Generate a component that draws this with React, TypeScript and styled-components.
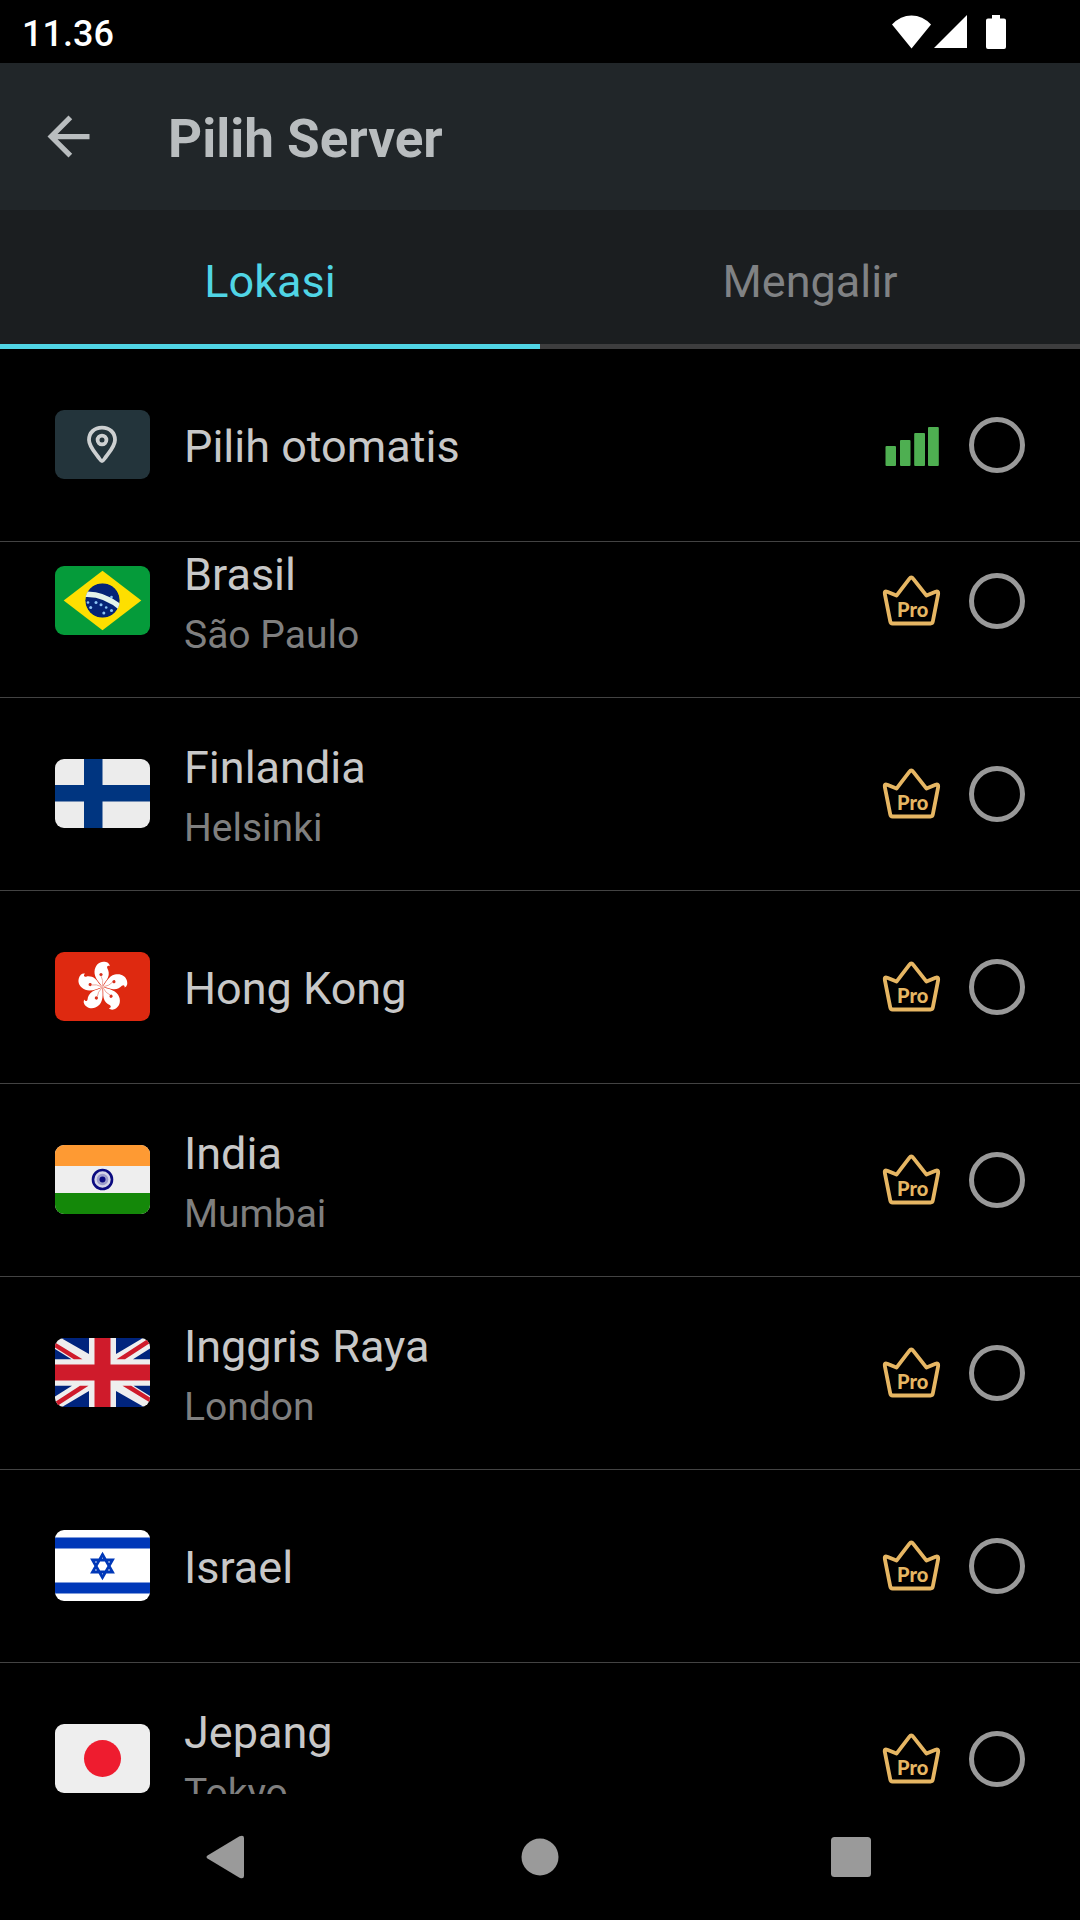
import React, { useLayoutEffect, useRef, useState } from "react";
import styled, { createGlobalStyle } from "styled-components";

const GlobalStyle = createGlobalStyle`
  *, *::before, *::after { box-sizing: border-box; }
  body {
    margin: 0;
    background: #000;
    color: #c8c8c8;
    font-family: Roboto, "Liberation Sans", sans-serif;
  }
  button { font: inherit; }
`;

const Screen = styled.div`
  display: flex;
  flex-direction: column;
  height: 100vh;
  background: #000;
`;

const StatusBar = styled.div`
  display: flex;
  align-items: center;
  justify-content: space-between;
  flex: none;
  height: 63px;
  padding: 0 74px 0 22px;
  color: #fff;
`;

const Clock = styled.time`
  padding-top: 4px;
  font-size: 36px;
  line-height: 40px;
  font-weight: 500;
`;

const StatusIcons = styled.div`
  display: flex;
  align-items: center;

  svg + svg { margin-left: 3px; }
  svg:last-child { margin-left: 19px; }
`;

const Header = styled.header`
  display: flex;
  align-items: center;
  flex: none;
  gap: 68px;
  height: 147px;
  padding: 0 37px;
  background: #212629;
  color: #b9bdbf;
`;

const BackButton = styled.button`
  display: flex;
  padding: 0;
  border: 0;
  background: none;
  color: inherit;
`;

const Title = styled.h1`
  margin: 0;
  padding-top: 4px;
  font-size: 53px;
  line-height: 64px;
  font-weight: 700;
`;

const Tabs = styled.div`
  display: grid;
  grid-template-columns: 1fr 1fr;
  flex: none;
  background: #1b1e20;
`;

const Tab = styled.button<{ $active: boolean }>`
  height: 139px;
  padding: 10px 0 0;
  border: 0;
  border-bottom: 5px solid ${(p) => (p.$active ? "#50d5e5" : "#3d3d3e")};
  background: none;
  color: ${(p) => (p.$active ? "#50d5e5" : "#808284")};
  font-size: 45px;
  line-height: 64px;
`;

const ServerList = styled.ul`
  flex: 1;
  min-height: 0;
  margin: 0;
  padding: 0;
  list-style: none;
  overflow-y: auto;
  scrollbar-width: none;
`;

const Row = styled.label`
  display: flex;
  align-items: center;
  flex: none;
  gap: 28px;
  height: 193px;
  padding: 0 55px;
  border-bottom: 1px solid #434343;
`;

const RowText = styled.span`
  display: flex;
  flex: 1;
  flex-direction: column;
  padding: 4px 0 0 6px;
`;

const Name = styled.span`
  font-size: 45px;
  line-height: 64px;
`;

const City = styled.span`
  color: #7f7f7f;
  font-size: 39px;
  line-height: 56px;
`;

const Radio = styled.input`
  appearance: none;
  flex: none;
  width: 56px;
  height: 56px;
  margin: 0;
  border: 5px solid #999;
  border-radius: 50%;

  &:checked {
    background: radial-gradient(circle, #50d5e5 50%, transparent 54%);
    border-color: #50d5e5;
  }
`;

const Flag = styled.svg`
  flex: none;
  margin-bottom: 1px;
  border-radius: 9px;
`;

const NavBar = styled.nav`
  display: flex;
  justify-content: center;
  flex: none;
  height: 126px;
`;

const NavButton = styled.button`
  display: flex;
  align-items: center;
  justify-content: center;
  width: 312px;
  padding: 0;
  border: 0;
  background: none;
  color: #9a9a9a;
`;

const PinTile = () => (
  <Flag width="95" height="69" viewBox="0 0 95 69" aria-hidden>
    <rect width="95" height="69" fill="#23343b" />
    <g fill="none" stroke="#cdd0d1" strokeWidth="3.8" strokeLinejoin="round">
      <path d="M47 51 C45.5 51 44.5 48.5 42.5 46 C38 40 34 35.500 34 30 C34 22.500 39.500 17.600 47 17.600 C54.500 17.600 60 22.500 60 30 C60 35.500 56 40 51.500 46 C49.500 48.500 48.500 51 47 51 Z" />
      <circle cx="47" cy="30" r="4.400" />
    </g>
  </Flag>
);

const Brazil = () => (
  <Flag width="95" height="69" viewBox="0 0 95 69" aria-hidden>
    <defs>
      <clipPath id="globe">
        <circle cx="47.500" cy="34.500" r="17.300" />
      </clipPath>
    </defs>
    <rect width="95" height="69" fill="#059b3a" />
    <path d="M8.700 34.500 47.500 4.700 86.300 34.500 47.500 64.300Z" fill="#fedf00" />
    <g clipPath="url(#globe)">
      <circle cx="47.500" cy="34.500" r="17.300" fill="#052476" />
      <path d="M28 28.500 Q49 26.500 68 43.500" fill="none" stroke="#e3f3ea" strokeWidth="5.400" />
      <g fill="#8cc5f5">
        <circle cx="33" cy="36.500" r="1.300" />
        <circle cx="35.700" cy="41.500" r="1.500" />
        <circle cx="41" cy="36.500" r="1.500" />
        <circle cx="46" cy="38.800" r="1.500" />
        <circle cx="51.200" cy="41.500" r="1.300" />
        <circle cx="56.500" cy="44.500" r="1.500" />
        <circle cx="48.800" cy="47" r="1.500" />
        <circle cx="56.500" cy="31" r="1.300" />
      </g>
    </g>
  </Flag>
);

const Finland = () => (
  <Flag width="95" height="69" viewBox="0 0 95 69" aria-hidden>
    <rect width="95" height="69" fill="#ececec" />
    <path d="M29 0h18.500v69H29zM0 26h95v16.500H0z" fill="#003580" />
  </Flag>
);

const HongKong = () => (
  <Flag width="95" height="69" viewBox="0 0 95 69" aria-hidden>
    <rect width="95" height="69" fill="#de2910" />
    {[0, 72, 144, 216, 288].map((angle) => (
      <g key={angle} transform={`translate(47.500 35) rotate(${angle})`}>
        <path
          d="M0 0 C-2.500 -4 -8.500 -9 -8 -15.500 C-7.500 -21.500 -3.500 -25.200 1 -25.200 C4.500 -25.200 7 -23.800 7.300 -20.800 C5.500 -22 4 -20.800 4.800 -18.800 C6.200 -16.500 7 -13 5.500 -9.500 C4 -6 1.200 -4 0 0Z"
          fill="#fff"
        />
        <path d="M0 -1 Q1 -7 -1.500 -11" fill="none" stroke="#e98a7c" strokeWidth="0.700" />
        <circle cx="-1.500" cy="-12.500" r="1.600" fill="#d8301c" />
      </g>
    ))}
  </Flag>
);

const India = () => (
  <Flag width="95" height="69" viewBox="0 0 95 69" aria-hidden>
    <rect width="95" height="69" fill="#eee" />
    <rect width="95" height="21" fill="#fe9a33" />
    <rect y="48" width="95" height="21" fill="#148809" />
    <circle cx="47.500" cy="34.500" r="9.500" fill="#d5d5e8" stroke="#0b0b80" strokeWidth="2.600" />
    <circle cx="47.500" cy="34.500" r="5.800" fill="#9c9ccb" />
    <circle cx="47.500" cy="34.500" r="3" fill="#0b0b80" />
  </Flag>
);

const Britain = () => (
  <Flag width="95" height="69" viewBox="0 0 95 69" aria-hidden>
    <rect width="95" height="69" fill="#eee" />
    {[0, 180].map((angle) => (
      <g key={angle} transform={`rotate(${angle} 47.500 34.500)`}>
        <path
          d="M6 0H34V16ZM0 11V21.300H16.500ZM61 0H88L61 16ZM95 10.500V21.300H78Z"
          fill="#00247d"
        />
        <path d="M0 4.500 27.500 21.300H18.800L0 9.500ZM61.500 21.300 92 1.500 95 0V5L70 21.300Z" fill="#cf1b2b" />
      </g>
    ))}
    <path d="M39.500 0h16v69h-16zM0 26.500h95v16H0z" fill="#cf1b2b" />
  </Flag>
);

const Israel = () => (
  <Flag width="95" height="71" viewBox="0 0 95 71" aria-hidden>
    <rect width="95" height="71" fill="#fff" />
    <path d="M0 7.500h95v11H0zM0 52.500h95v11H0z" fill="#0038b8" />
    <path
      d="M47.500 24.500 57.500 42H37.500ZM47.500 47.500 37.500 30H57.500Z"
      fill="none"
      stroke="#0038b8"
      strokeWidth="2.800"
    />
  </Flag>
);

const Japan = () => (
  <Flag width="95" height="69" viewBox="0 0 95 69" aria-hidden>
    <rect width="95" height="69" fill="#eee" />
    <circle cx="47.500" cy="34.500" r="18.500" fill="#ee1c2f" />
  </Flag>
);

const SignalBars = () => (
  <svg width="60" height="56" viewBox="0 0 60 56" fill="#4eaf51" role="img" aria-label="Sinyal kuat">
    <rect x="4.500" y="29" width="10.500" height="20" rx="1" />
    <rect x="19" y="23" width="10.500" height="26" rx="1" />
    <rect x="33.200" y="16" width="10.800" height="33" rx="1" />
    <rect x="47" y="10" width="10.800" height="39" rx="1" />
  </svg>
);

const ProLabel = styled.text`
  font-family: Lato, Roboto, sans-serif;
  font-size: 20px;
  font-weight: 900;
`;

const ProCrown = () => (
  <svg width="60" height="56" viewBox="0 0 60 56" aria-label="Pro" role="img">
    <path
      d="M3.800 20.800 Q3.200 17.800 6.200 18.700 L15.500 22.600 L28.300 5.800 Q30.300 3.200 32.300 5.800 L45.500 22.600 L54.600 18.700 Q57.600 17.800 57.200 20.800 L51.900 48.200 Q51.500 50.500 49.500 50.500 L11.600 50.500 Q9.600 50.500 9.200 48.200 Z"
      fill="none"
      stroke="#e6b663"
      strokeWidth="3.800"
      strokeLinejoin="round"
    />
    <ProLabel x="16" y="44" fill="#e6b663">Pro</ProLabel>
  </svg>
);

interface Server {
  id: string;
  name: string;
  city?: string;
  flag: React.ReactNode;
}

const servers: Server[] = [
  { id: "br", name: "Brasil", city: "São Paulo", flag: <Brazil /> },
  { id: "fi", name: "Finlandia", city: "Helsinki", flag: <Finland /> },
  { id: "hk", name: "Hong Kong", flag: <HongKong /> },
  { id: "in", name: "India", city: "Mumbai", flag: <India /> },
  { id: "gb", name: "Inggris Raya", city: "London", flag: <Britain /> },
  { id: "il", name: "Israel", flag: <Israel /> },
  { id: "jp", name: "Jepang", city: "Tokyo", flag: <Japan /> },
];

const INITIAL_SCROLL = 37;

export default function App() {
  const [tab, setTab] = useState("Lokasi");
  const [selected, setSelected] = useState("");
  const list = useRef<HTMLUListElement>(null);

  useLayoutEffect(() => {
    if (list.current) list.current.scrollTop = INITIAL_SCROLL;
  }, []);

  return (
    <Screen>
      <GlobalStyle />
      <StatusBar>
        <Clock>11.36</Clock>
        <StatusIcons>
          <svg width="39" height="34" viewBox="0 0 39 34" fill="#fff" aria-hidden>
            <path d="M0 9.500 Q8.500 0.500 19.500 0.500 T39 9.500 L19.500 33.500Z" />
          </svg>
          <svg width="33" height="34" viewBox="0 0 33 34" fill="#fff" aria-hidden>
            <path d="M0 33 33 0V33Z" />
          </svg>
          <svg width="20" height="34" viewBox="0 0 20 34" fill="#fff" aria-hidden>
            <path d="M6 0H14V3.500H18Q20 3.500 20 5.500V32Q20 34 18 34H2Q0 34 0 32V5.500Q0 3.500 2 3.500H6Z" />
          </svg>
        </StatusIcons>
      </StatusBar>

      <Header>
        <BackButton type="button" aria-label="Kembali">
          <svg width="63" height="63" viewBox="0 0 24 24" fill="currentColor" aria-hidden>
            <path d="M20 11H7.830l5.590-5.590L12 4l-8 8 8 8 1.410-1.410L7.830 13H20v-2z" />
          </svg>
        </BackButton>
        <Title>Pilih Server</Title>
      </Header>

      <Tabs role="tablist">
        {["Lokasi", "Mengalir"].map((label) => (
          <Tab
            key={label}
            type="button"
            role="tab"
            aria-selected={tab === label}
            $active={tab === label}
            onClick={() => setTab(label)}
          >
            {label}
          </Tab>
        ))}
      </Tabs>

      <Row>
        <PinTile />
        <RowText>
          <Name>Pilih otomatis</Name>
        </RowText>
        <SignalBars />
        <Radio
          type="radio"
          name="server"
          checked={selected === "auto"}
          onChange={() => setSelected("auto")}
        />
      </Row>

      <ServerList ref={list}>
        {servers.map((server) => (
          <li key={server.id}>
            <Row>
              {server.flag}
              <RowText>
                <Name>{server.name}</Name>
                {server.city && <City>{server.city}</City>}
              </RowText>
              <ProCrown />
              <Radio
                type="radio"
                name="server"
                checked={selected === server.id}
                onChange={() => setSelected(server.id)}
              />
            </Row>
          </li>
        ))}
      </ServerList>

      <NavBar>
        <NavButton type="button" aria-label="Kembali">
          <svg width="44" height="44" viewBox="0 0 44 44" fill="currentColor" aria-hidden>
            <path d="M1.500 20.500 33.500 1.200Q38 -0.500 38 3V41Q38 44.500 33.500 42.800L1.500 23.500Q-0.500 22 1.500 20.500Z" />
          </svg>
        </NavButton>
        <NavButton type="button" aria-label="Beranda">
          <svg width="44" height="44" viewBox="0 0 44 44" fill="currentColor" aria-hidden>
            <circle cx="22" cy="22" r="18.500" />
          </svg>
        </NavButton>
        <NavButton type="button" aria-label="Terkini">
          <svg width="44" height="44" viewBox="0 0 44 44" fill="currentColor" aria-hidden>
            <rect x="1" y="2" width="40" height="40" rx="3.500" />
          </svg>
        </NavButton>
      </NavBar>
    </Screen>
  );
}
